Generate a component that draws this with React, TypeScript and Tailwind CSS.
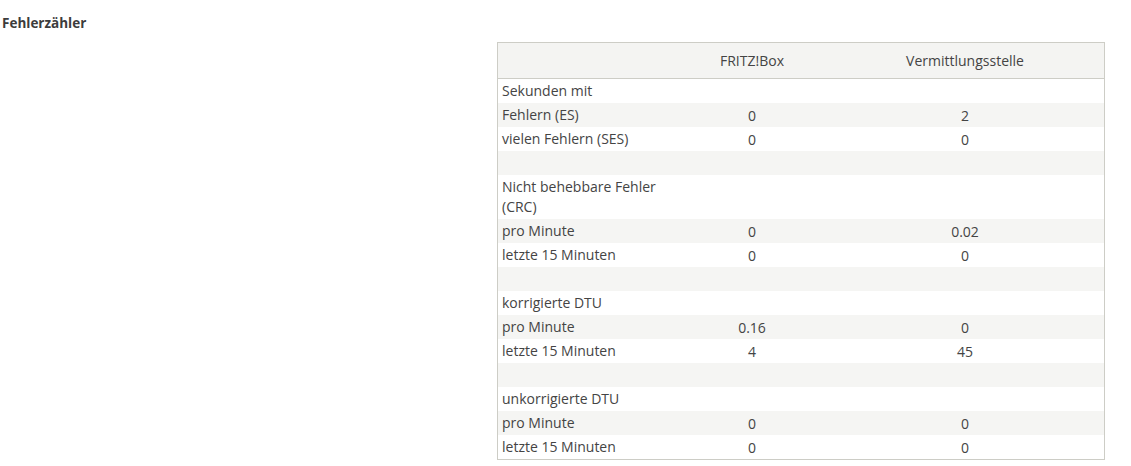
import React from "react";

type Row = { label: string; a?: string; b?: string; tall?: boolean };

const rows: Row[] = [
  { label: "Sekunden mit" },
  { label: "Fehlern (ES)", a: "0", b: "2" },
  { label: "vielen Fehlern (SES)", a: "0", b: "0" },
  { label: "" },
  { label: "Nicht behebbare Fehler (CRC)", tall: true },
  { label: "pro Minute", a: "0", b: "0.02" },
  { label: "letzte 15 Minuten", a: "0", b: "0" },
  { label: "" },
  { label: "korrigierte DTU" },
  { label: "pro Minute", a: "0.16", b: "0" },
  { label: "letzte 15 Minuten", a: "4", b: "45" },
  { label: "" },
  { label: "unkorrigierte DTU" },
  { label: "pro Minute", a: "0", b: "0" },
  { label: "letzte 15 Minuten", a: "0", b: "0" },
];

export default function App() {
  return (
    <div
      className="w-[1131px] h-[466px] bg-white text-[#444] text-[14px]"
      style={{ fontFamily: '"Open Sans", "Noto Sans", sans-serif' }}
    >
      <div className="pt-[14px] pl-[2px] font-bold text-[#3c3c3c] text-[13.5px] leading-[18px]">
        Fehlerzähler
      </div>
      <div className="flex pl-[497px] pt-[10px]">
        <div className="w-[608px] border border-[#cdcdc6]">
          <div className="flex h-[36px] items-center bg-[#f4f4f2] border-b border-[#cdcdc6]">
            <div className="w-[164px]" />
            <div className="w-[180px] text-center">FRITZ!Box</div>
            <div className="w-[246px] text-center">Vermittlungsstelle</div>
          </div>
          {rows.map((r, i) => (
            <div
              key={i}
              className={`flex ${r.tall ? "h-[44px] items-start pt-[2px]" : "h-[24px] items-center"} ${
                i % 2 === 1 ? "bg-[#f5f5f3]" : "bg-white"
              }`}
            >
              <div className="w-[164px] pl-[4px] leading-[20px]">{r.label}</div>
              <div className="w-[180px] text-center">{r.a}</div>
              <div className="w-[246px] text-center">{r.b}</div>
            </div>
          ))}
        </div>
      </div>
    </div>
  );
}
